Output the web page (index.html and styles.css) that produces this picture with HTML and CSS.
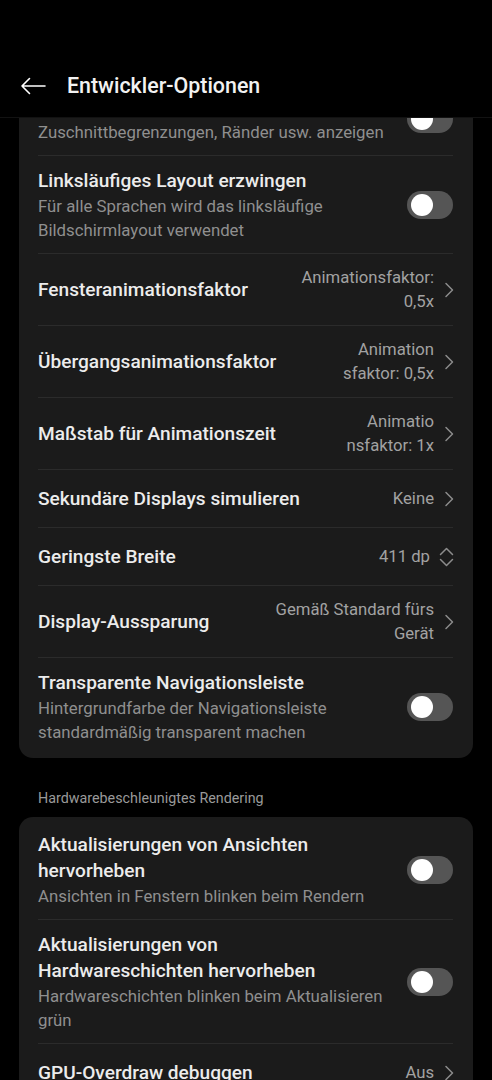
FILE: index.html
```html
<!DOCTYPE html>
<html lang="de">
<head>
<meta charset="utf-8">
<title>Entwickler-Optionen</title>
<link rel="stylesheet" href="styles.css">
</head>
<body>
<div class="screen">
  <header class="appbar">
    <svg class="back" width="26" height="18" viewBox="0 0 26 18"><path d="M25 9H2M9.5 1.5L2 9l7.5 7.5" fill="none" stroke="#fff" stroke-width="1.6" stroke-linecap="round" stroke-linejoin="round"/></svg>
    <h1 class="title">Entwickler-Optionen</h1>
  </header>
  <main class="viewport">
    <div class="scroller">
      <section class="card">
        <div class="row">
          <div class="text">
            <div class="r-title">Layoutgrenzen anzeigen</div>
            <div class="r-sub">Zuschnittbegrenzungen, Ränder usw. anzeigen</div>
          </div>
          <span class="switch"><span class="knob"></span></span>
        </div>
        <div class="row">
          <div class="text">
            <div class="r-title">Linksläufiges Layout erzwingen</div>
            <div class="r-sub">Für alle Sprachen wird das linksläufige<br>Bildschirmlayout verwendet</div>
          </div>
          <span class="switch"><span class="knob"></span></span>
        </div>
        <div class="row">
          <div class="text"><div class="r-title">Fensteranimationsfaktor</div></div>
          <div class="value">Animationsfaktor:<br>0,5x</div>
          <svg class="chev" width="12" height="16" viewBox="0 0 12 16"><path d="M3 1.5l6.5 6.5L3 14.5" fill="none" stroke="#8c8c8c" stroke-width="1.5" stroke-linecap="round" stroke-linejoin="round"/></svg>
        </div>
        <div class="row">
          <div class="text"><div class="r-title">Übergangsanimationsfaktor</div></div>
          <div class="value">Animation<br>sfaktor: 0,5x</div>
          <svg class="chev" width="12" height="16" viewBox="0 0 12 16"><path d="M3 1.5l6.5 6.5L3 14.5" fill="none" stroke="#8c8c8c" stroke-width="1.5" stroke-linecap="round" stroke-linejoin="round"/></svg>
        </div>
        <div class="row">
          <div class="text"><div class="r-title">Maßstab für Animationszeit</div></div>
          <div class="value">Animatio<br>nsfaktor: 1x</div>
          <svg class="chev" width="12" height="16" viewBox="0 0 12 16"><path d="M3 1.5l6.5 6.5L3 14.5" fill="none" stroke="#8c8c8c" stroke-width="1.5" stroke-linecap="round" stroke-linejoin="round"/></svg>
        </div>
        <div class="row">
          <div class="text"><div class="r-title">Sekundäre Displays simulieren</div></div>
          <div class="value">Keine</div>
          <svg class="chev" width="12" height="16" viewBox="0 0 12 16"><path d="M3 1.5l6.5 6.5L3 14.5" fill="none" stroke="#8c8c8c" stroke-width="1.5" stroke-linecap="round" stroke-linejoin="round"/></svg>
        </div>
        <div class="row">
          <div class="text"><div class="r-title">Geringste Breite</div></div>
          <div class="value">411 dp</div>
          <svg class="updown" width="15" height="20" viewBox="0 0 15 20"><path d="M1.5 7.5L7.5 1.5l6 6M1.5 12.5l6 6 6-6" fill="none" stroke="#8c8c8c" stroke-width="1.5" stroke-linecap="round" stroke-linejoin="round"/></svg>
        </div>
        <div class="row">
          <div class="text"><div class="r-title">Display-Aussparung</div></div>
          <div class="value">Gemäß Standard fürs<br>Gerät</div>
          <svg class="chev" width="12" height="16" viewBox="0 0 12 16"><path d="M3 1.5l6.5 6.5L3 14.5" fill="none" stroke="#8c8c8c" stroke-width="1.5" stroke-linecap="round" stroke-linejoin="round"/></svg>
        </div>
        <div class="row">
          <div class="text">
            <div class="r-title">Transparente Navigationsleiste</div>
            <div class="r-sub">Hintergrundfarbe der Navigationsleiste<br>standardmäßig transparent machen</div>
          </div>
          <span class="switch"><span class="knob"></span></span>
        </div>
      </section>

      <h2 class="section-label">Hardwarebeschleunigtes Rendering</h2>

      <section class="card">
        <div class="row">
          <div class="text">
            <div class="r-title">Aktualisierungen von Ansichten<br>hervorheben</div>
            <div class="r-sub">Ansichten in Fenstern blinken beim Rendern</div>
          </div>
          <span class="switch"><span class="knob"></span></span>
        </div>
        <div class="row">
          <div class="text">
            <div class="r-title">Aktualisierungen von<br>Hardwareschichten hervorheben</div>
            <div class="r-sub">Hardwareschichten blinken beim Aktualisieren<br>grün</div>
          </div>
          <span class="switch"><span class="knob"></span></span>
        </div>
        <div class="row">
          <div class="text"><div class="r-title">GPU-Overdraw debuggen</div></div>
          <div class="value">Aus</div>
          <svg class="chev" width="12" height="16" viewBox="0 0 12 16"><path d="M3 1.5l6.5 6.5L3 14.5" fill="none" stroke="#8c8c8c" stroke-width="1.5" stroke-linecap="round" stroke-linejoin="round"/></svg>
        </div>
        <div class="row">
          <div class="text"><div class="r-title">Nicht rechteckige Clip-Vorgänge debuggen</div></div>
          <div class="value">Aus</div>
          <svg class="chev" width="12" height="16" viewBox="0 0 12 16"><path d="M3 1.5l6.5 6.5L3 14.5" fill="none" stroke="#8c8c8c" stroke-width="1.5" stroke-linecap="round" stroke-linejoin="round"/></svg>
        </div>
      </section>
    </div>
  </main>
</div>
</body>
</html>
```

FILE: styles.css
```css
* { box-sizing: border-box; }
html, body {
  margin: 0;
  padding: 0;
  background: #000;
}
body {
  font-family: Roboto, "Noto Sans", "Liberation Sans", sans-serif;
  color: #e8e8e8;
}
.screen {
  width: 492px;
  height: 1080px;
  overflow: hidden;
  display: flex;
  flex-direction: column;
  background: #000;
}
.appbar {
  flex: none;
  height: 118px;
  display: flex;
  align-items: center;
  padding: 54px 0 0 20px;
  background: #000;
  border-bottom: 1px solid #121212;
}
.back {
  display: block;
  flex: none;
}
.title {
  margin: 0 0 0 21px;
  font-size: 21.4px;
  font-weight: 500;
  color: #f2f2f2;
  letter-spacing: 0;
}
.viewport {
  flex: 1;
  overflow: hidden;
}
.scroller {
  margin-top: -39px;
  padding: 0 19px;
}
.card {
  background: #1b1b1b;
  border-radius: 14px;
  padding: 3px 20px 3px 19px;
}
.row {
  display: flex;
  align-items: center;
  min-height: 58px;
  padding: 12px 0 11px;
  border-bottom: 1px solid #2b2b2b;
}
.row:last-child {
  border-bottom: none;
}
.text {
  flex: 1;
  min-width: 0;
}
.r-title {
  font-size: 19.1px;
  font-weight: 500;
  line-height: 26px;
  color: #ececec;
}
.r-sub {
  font-size: 16.8px;
  line-height: 24px;
  color: #8f8f8f;
  white-space: nowrap;
}
.value {
  flex: none;
  text-align: right;
  font-size: 16.7px;
  line-height: 24px;
  color: #a2a2a2;
  margin-left: 12px;
}
.chev {
  flex: none;
  display: block;
  margin: 0 -2px 0 9px;
}
.updown {
  flex: none;
  display: block;
  margin: 0 -1px 0 9px;
}
.switch {
  flex: none;
  width: 46px;
  height: 28px;
  border-radius: 14px;
  background: #555;
  display: flex;
  align-items: center;
  padding-left: 4px;
  margin-left: 12px;
}
.knob {
  width: 22px;
  height: 22px;
  border-radius: 50%;
  background: #fff;
}
.section-label {
  margin: 0;
  padding: 30px 19px 9px;
  font-size: 14.3px;
  font-weight: 400;
  line-height: 20px;
  color: #9a9a9a;
}
```
